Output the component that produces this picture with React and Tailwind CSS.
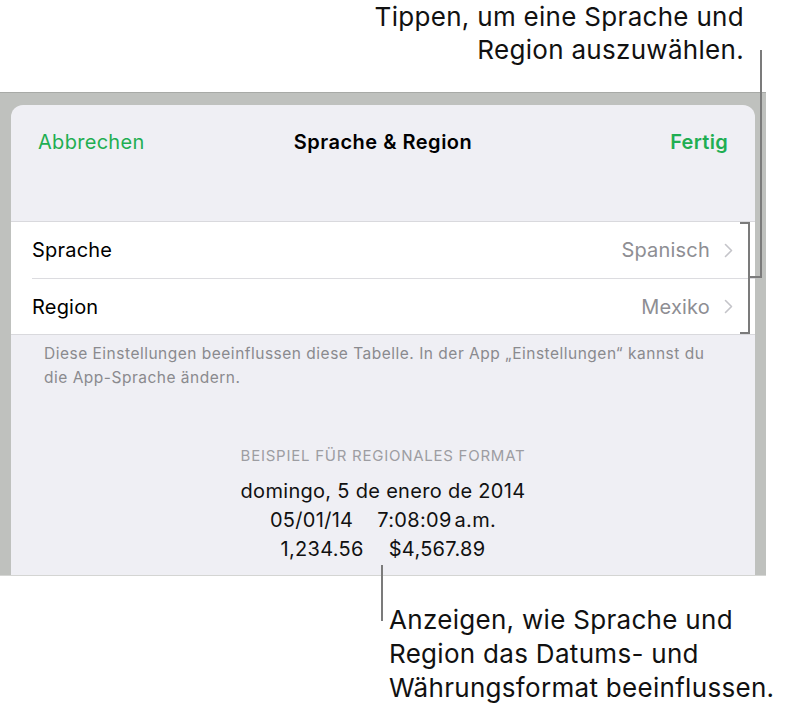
export default function App() {
  const font = { fontFamily: "Inter, 'Liberation Sans', sans-serif" };
  return (
    <div className="relative w-[788px] h-[710px] bg-white overflow-hidden text-black" style={font}>
      {/* top callout */}
      <div className="h-[92px] pr-[44px] text-right text-[26px] leading-[33px] tracking-[0.3px] text-[#111]">
        <p>Tippen, um eine Sprache und</p>
        <p>Region auszuwählen.</p>
      </div>

      {/* device frame */}
      <div className="w-[766px] h-[484px] bg-[#bfc1be] border-t border-[#a8aaa7] border-b border-b-[#d4d5d3] pt-[12px] pl-[11px] overflow-hidden">
        <div className="w-[744px] h-[472px] rounded-t-[12px] bg-[#efeff4]">
          <div className="h-[74px] flex items-center justify-between px-[27px] text-[20px] tracking-[0.3px]">
            <span className="text-[#1fae52] w-[140px]">Abbrechen</span>
            <span className="font-semibold tracking-[0.5px]">Sprache &amp; Region</span>
            <span className="text-[#1fae52] font-semibold w-[140px] text-right">Fertig</span>
          </div>

          <div className="mt-[42px] bg-white border-t border-b border-[#d9d9dd] text-[20px] tracking-[0.2px]">
            <div className="h-[56px] flex items-center pl-[21px] pr-[22px]">
              <span className="flex-1">Sprache</span>
              <span className="text-[#8e8e93]">Spanisch</span>
              <Chevron />
            </div>
            <div className="ml-[21px] h-px bg-[#dcdce0]" />
            <div className="h-[55px] flex items-center pl-[21px] pr-[22px]">
              <span className="flex-1">Region</span>
              <span className="text-[#8e8e93]">Mexiko</span>
              <Chevron />
            </div>
          </div>

          <div className="pl-[33px] pt-[7px] text-[15.5px] leading-[24px] tracking-[0.5px] text-[#8a8a8e] whitespace-nowrap">
            Diese Einstellungen beeinflussen diese Tabelle. In der App „Einstellungen“ kannst du
            <br />
            die App-Sprache ändern.
          </div>

          <div className="mt-[56px] flex flex-col items-center">
            <p className="text-[15px] leading-[20px] tracking-[0.75px] text-[#9d9da2]">BEISPIEL FÜR REGIONALES FORMAT</p>
            <div className="mt-[11px] text-[20px] leading-[29px] tracking-[0.3px] text-center text-[#111]">
              <p>domingo, 5 de enero de 2014</p>
              <p>
                05/01/14<span className="inline-block w-[24px]" />7:08:09<span className="inline-block w-[3px]" />a.m.
              </p>
              <p>
                1,234.56<span className="inline-block w-[25px]" />$4,567.89
              </p>
            </div>
          </div>
        </div>
      </div>

      {/* bottom callout */}
      <div className="pl-[389px] pt-[27px] text-[26px] leading-[34px] tracking-[0.3px] text-[#111]">
        <p>Anzeigen, wie Sprache und</p>
        <p>Region das Datums- und</p>
        <p>Währungsformat beeinflussen.</p>
      </div>

      {/* callout lines */}
      <div className="absolute left-[740px] top-[222px] w-[10px] h-[112px] border-t-2 border-b-2 border-r-2 border-[#7b7b7b]" />
      <div className="absolute left-[749px] top-[276px] w-[13px] h-[2px] bg-[#7b7b7b]" />
      <div className="absolute left-[760px] top-[50px] w-[2px] h-[228px] bg-[#7b7b7b]" />
      <div className="absolute left-[381px] top-[565px] w-[2px] h-[56px] bg-[#7b7b7b]" />
    </div>
  );
}

function Chevron() {
  return (
    <svg className="ml-[14px]" width="9" height="15" viewBox="0 0 9 15" fill="none">
      <path d="M1.5 1.5 L7.5 7.5 L1.5 13.5" stroke="#c4c4c9" strokeWidth="1.6" strokeLinecap="round" strokeLinejoin="round" />
    </svg>
  );
}
